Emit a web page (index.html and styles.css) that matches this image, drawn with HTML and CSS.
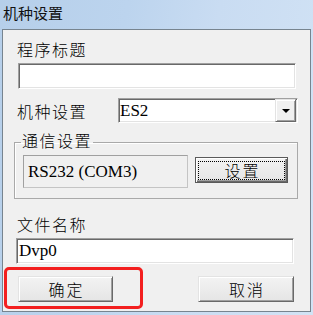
FILE: index.html
```html
<!DOCTYPE html>
<html>
<head>
<meta charset="utf-8">
<link rel="stylesheet" href="styles.css">
</head>
<body>
<div class="window">
  <div class="titlebar">机种设置</div>
  <div class="client">
    <div class="label">程序标题</div>
    <div class="edit edit-title"></div>
    <div class="row">
      <span class="label row-label">机种设置</span>
      <div class="combo">
        <span class="combo-text">ES2</span>
        <span class="combo-btn"><svg width="8" height="4" viewBox="0 0 8 4"><path d="M0 0H8L4 4Z" fill="#000"/></svg></span>
      </div>
    </div>
    <fieldset class="group">
      <legend>通信设置</legend>
      <div class="group-body">
        <div class="static">RS232 (COM3)</div>
        <button class="btn btn-default"><span class="focus">设置</span></button>
      </div>
    </fieldset>
    <div class="label label-file">文件名称</div>
    <div class="edit edit-file">Dvp0</div>
    <div class="actions">
      <button class="btn btn-ok">确定</button>
      <button class="btn btn-cancel">取消</button>
    </div>
    <div class="highlight"></div>
  </div>
</div>
</body>
</html>
```

FILE: styles.css
```css
html, body {
  margin: 0;
  padding: 0;
  width: 313px;
  height: 315px;
  overflow: hidden;
}
body {
  background: #c3d8ef;
  font-family: "Noto Sans CJK SC", sans-serif;
  color: #000;
}
.window {
  width: 313px;
  height: 315px;
  background: linear-gradient(100deg, #b6cfea 0%, #bcd4ee 35%, #c9dcf2 60%, #d2e3f5 100%);
}
.titlebar {
  height: 29px;
  box-sizing: border-box;
  padding: 3px 0 0 3px;
  font-size: 15px;
  line-height: 20px;
  color: #111;
}
.client {
  position: relative;
  margin: 0 2px;
  height: 283px;
  box-sizing: border-box;
  border: 1px solid #77848f;
  background: #f0f0f0;
  padding: 10px 12px 0 11px;
}
.label {
  font-size: 16px;
  font-weight: 300;
  line-height: 18px;
  letter-spacing: 1.5px;
  padding-left: 3px;
}
.edit {
  box-sizing: border-box;
  height: 26px;
  background: #fff;
  border: 1px solid;
  border-color: #a0a0a0 #fff #fff #a0a0a0;
  box-shadow: inset 1px 1px #696969, inset -1px -1px #e3e3e3;
  font-family: "Liberation Serif", serif;
  font-size: 17px;
  line-height: 24px;
  padding-left: 2px;
}
.edit-title {
  margin: 5px 2px 0 4px;
}
.row {
  display: flex;
  align-items: center;
  margin-top: 9px;
}
.row-label {
  flex: 0 0 104px;
  box-sizing: border-box;
}
.combo {
  flex: 1;
  height: 25px;
  box-sizing: border-box;
  display: flex;
  align-items: center;
  background: #fff;
  border: 1px solid;
  border-color: #a0a0a0 #fff #fff #a0a0a0;
  box-shadow: inset 1px 1px #696969, inset -1px -1px #e3e3e3;
}
.combo-text {
  flex: 1;
  padding-left: 1px;
  font-family: "Liberation Serif", serif;
  font-size: 17px;
  line-height: 21px;
}
.combo-btn {
  width: 21px;
  height: 23px;
  margin-right: 1px;
  box-sizing: border-box;
  display: flex;
  align-items: center;
  justify-content: center;
  background: #f0f0f0;
  border: 1px solid;
  border-color: #e3e3e3 #696969 #696969 #e3e3e3;
  box-shadow: inset 1px 1px #fff, inset -1px -1px #a0a0a0;
}
.group {
  margin: 8px 0 0 0;
  padding: 0;
  border: 1px solid #a9a9a9;
  box-shadow: inset 1px 1px #fff;
  min-inline-size: 0;
}
.group legend {
  margin-left: 6px;
  padding: 0 1px 5px 1px;
  font-size: 16px;
  font-weight: 300;
  line-height: 18px;
  letter-spacing: 1.5px;
}
.group-body {
  display: flex;
  align-items: flex-start;
  gap: 7px;
  padding: 1px 9px 10px 8px;
}
.static {
  width: 165px;
  height: 33px;
  box-sizing: border-box;
  display: flex;
  align-items: center;
  padding-left: 4px;
  border: 1px solid;
  border-color: #a0a0a0 #c4c4c4 #c4c4c4 #a0a0a0;
  font-family: "Liberation Serif", serif;
  font-size: 17px;
}
.btn {
  height: 26px;
  box-sizing: border-box;
  margin: 0;
  padding: 0;
  font-family: "Noto Sans CJK SC", sans-serif;
  font-size: 16px;
  font-weight: 300;
  line-height: 20px;
  letter-spacing: 2px;
  text-indent: 2px;
  color: #000;
  background: linear-gradient(#f3f3f3, #e5e5e5);
  border: 1px solid;
  border-color: #e3e3e3 #696969 #696969 #e3e3e3;
  box-shadow: inset 1px 1px #fff, inset -1px -1px #a0a0a0;
}
.btn-default {
  width: 93px;
  margin-top: 2px;
  padding: 3px 2px 2px 2px;
  border-color: #5a5a5a;
  box-shadow: inset 1px 1px #fff, inset -1px -1px #696969, inset -2px -2px #a0a0a0;
  display: flex;
}
.btn-default .focus {
  flex: 1;
  border: 1px dotted #000;
  line-height: 17px;
}
.label-file {
  margin-top: 16px;
}
.edit-file {
  margin: 5px 4px 0 2px;
}
.actions {
  display: flex;
  justify-content: space-between;
  margin-top: 12px;
  padding: 0 4px;
}
.btn-ok {
  width: 95px;
}
.btn-cancel {
  width: 96px;
}
.highlight {
  position: absolute;
  left: 1px;
  top: 237px;
  width: 139px;
  height: 42px;
  box-sizing: border-box;
  border: 3px solid #f31f1f;
  border-radius: 5px;
}
```
